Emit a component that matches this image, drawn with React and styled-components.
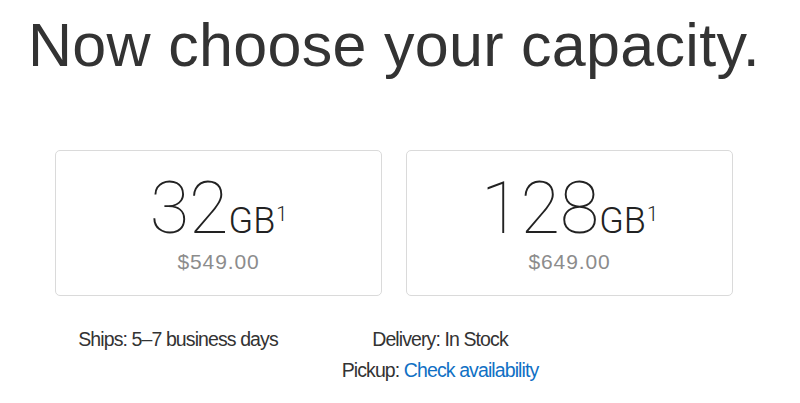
import styled, { createGlobalStyle } from 'styled-components';

const GlobalStyle = createGlobalStyle`
	body {
		margin: 0;
		background: #fff;
	}
`;

const options = [
	{ id: 'a', size: '32', price: '$549.00' },
	{ id: 'b', size: '128', price: '$649.00' },
];

const App = () => {
	return (
		<>
			<GlobalStyle />
			<Page>
				<Title>Now choose your capacity.</Title>
				<Cards>
					{options.map((opt) => (
						<Card key={opt.id}>
							<Capacity>
								{opt.size}
								<Unit>GB</Unit>
								<Footnote>1</Footnote>
							</Capacity>
							<Price>{opt.price}</Price>
						</Card>
					))}
				</Cards>
				<Notes>
					<Note>
						<Line>Ships: 5–7 business days</Line>
					</Note>
					<Note>
						<Line>Delivery: In Stock</Line>
						<Line>
							Pickup: <Link href='#'>Check availability</Link>
						</Line>
					</Note>
				</Notes>
			</Page>
		</>
	);
};

export default App;

const Page = styled.div`
	width: 800px;
	height: 403px;
	overflow: hidden;
	color: #333;
	font-family: 'Liberation Sans', Arial, sans-serif;
`;

const Title = styled.h1`
	margin: 0;
	padding: 15px 0 0 28px;
	font-size: 61px;
	line-height: 1;
	font-weight: 400;
	letter-spacing: 0.3px;
	color: #333;
	white-space: nowrap;
`;

const Cards = styled.div`
	display: flex;
	gap: 24px;
	margin-top: 74px;
	padding-left: 55px;
`;

const Card = styled.div`
	box-sizing: border-box;
	width: 327px;
	height: 146px;
	padding-top: 22px;
	border: 1px solid #dadada;
	border-radius: 5px;
	text-align: center;
`;

const Capacity = styled.div`
	font-family: Roboto, 'Liberation Sans', sans-serif;
	font-size: 72px;
	line-height: 72px;
	font-weight: 100;
	color: #222;
	white-space: nowrap;
`;

const Unit = styled.span`
	font-size: 36px;
	line-height: 1;
	font-weight: 300;
`;

const Footnote = styled.span`
	font-size: 20px;
	line-height: 1;
	font-weight: 300;
	vertical-align: 12px;
	margin-left: 1px;
`;

const Price = styled.div`
	margin-top: 6px;
	font-size: 21px;
	line-height: 21px;
	letter-spacing: 0.9px;
	color: #8c8c8c;
`;

const Notes = styled.div`
	display: grid;
	grid-template-columns: 262px 262px;
	margin: 28px 0 0 47px;
`;

const Note = styled.div`
	text-align: center;
	font-size: 19.5px;
	line-height: 31px;
	letter-spacing: -0.9px;
	color: #333;
`;

const Line = styled.div`
	white-space: nowrap;
`;

const Link = styled.a`
	color: #1070c4;
	text-decoration: none;
`;
